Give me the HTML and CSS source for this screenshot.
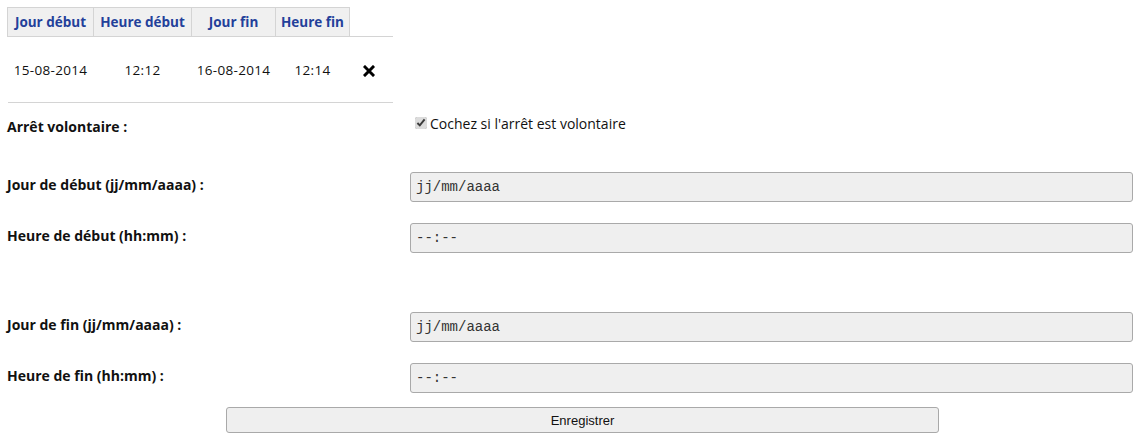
FILE: index.html
```html
<!DOCTYPE html>
<html lang="fr">
<head>
  <meta charset="UTF-8">
  <meta name="viewport" content="width=device-width, initial-scale=1.0">
  <title>Arrêts</title>
  <link rel="stylesheet" href="styles.css">
</head>
<body>
  <table class="stops">
    <thead>
      <tr>
        <th class="c1">Jour début</th>
        <th class="c2">Heure début</th>
        <th class="c3">Jour fin</th>
        <th class="c4">Heure fin</th>
        <th class="blank"></th>
      </tr>
    </thead>
    <tbody>
      <tr>
        <td>15-08-2014</td>
        <td>12:12</td>
        <td>16-08-2014</td>
        <td>12:14</td>
        <td>
          <svg class="remove" width="12" height="12" viewBox="0 0 12 12">
            <path d="M2 2 L10 10 M10 2 L2 10" stroke="#000" stroke-width="3" stroke-linecap="square"/>
          </svg>
        </td>
      </tr>
    </tbody>
  </table>

  <form class="stop-form">
    <div class="row first">
      <label>Arrêt volontaire :</label>
      <div class="check">
        <input type="checkbox" checked>
        <span>Cochez si l'arrêt est volontaire</span>
      </div>
    </div>
    <div class="row">
      <label>Jour de début (jj/mm/aaaa) :</label>
      <div class="field">jj/mm/aaaa</div>
    </div>
    <div class="row">
      <label>Heure de début (hh:mm) :</label>
      <div class="field">--:--</div>
    </div>
    <div class="row spaced">
      <label>Jour de fin (jj/mm/aaaa) :</label>
      <div class="field">jj/mm/aaaa</div>
    </div>
    <div class="row">
      <label>Heure de fin (hh:mm) :</label>
      <div class="field">--:--</div>
    </div>
    <button type="button" class="save">Enregistrer</button>
  </form>
</body>
</html>
```

FILE: styles.css
```css
body {
  font-family: "Open Sans", Arial, sans-serif;
  margin: 0;
  padding: 7px 6px 0 7px;
  background-color: #fff;
  color: #111;
}

.stops {
  border-collapse: collapse;
  width: 386px;
  font-size: 13.5px;
}

.stops th {
  background-color: #f0f0f0;
  border: 1px solid #d4d4d4;
  color: #23409a;
  font-weight: bold;
  height: 28px;
  padding: 0;
  text-align: center;
}

.stops th.c1 { width: 85px; }
.stops th.c2 { width: 97px; }
.stops th.c3 { width: 83px; }
.stops th.c4 { width: 73px; }

.stops th.blank {
  background-color: #fff;
  border: none;
  border-bottom: 1px solid #d4d4d4;
}

.stops td {
  height: 65px;
  text-align: center;
  padding: 0;
  border-bottom: 1px solid #d4d4d4;
  letter-spacing: 0.3px;
}

.remove {
  vertical-align: middle;
  margin-right: 4px;
}

.row {
  display: grid;
  grid-template-columns: 403px 1fr;
  align-items: center;
  height: 51px;
}

.row.first {
  height: 44px;
  margin-bottom: 14px;
}

.row.spaced {
  margin-top: 38px;
}

.row label {
  font-size: 14px;
  font-weight: bold;
  margin-top: -5px;
}

.row.first label {
  margin-top: 2px;
}

.check {
  display: flex;
  align-items: center;
  font-size: 14px;
  margin-top: -4px;
}

.check input {
  margin: 0 3px 0 5px;
  width: 12px;
  height: 12px;
  accent-color: #dcdcdc;
}

.field {
  height: 28px;
  background-color: #efefef;
  border: 1px solid #a9a9a9;
  border-radius: 3px;
  font-family: "Liberation Mono", "Courier New", monospace;
  font-size: 14px;
  color: #333;
  line-height: 28px;
  padding-left: 5px;
}

.save {
  display: block;
  margin: 4px 0 0 219px;
  width: 713px;
  height: 26px;
  background-color: #efefef;
  border: 1px solid #a9a9a9;
  border-radius: 3px;
  font-family: "Liberation Sans", Arial, sans-serif;
  font-size: 13px;
  color: #111;
}
```
